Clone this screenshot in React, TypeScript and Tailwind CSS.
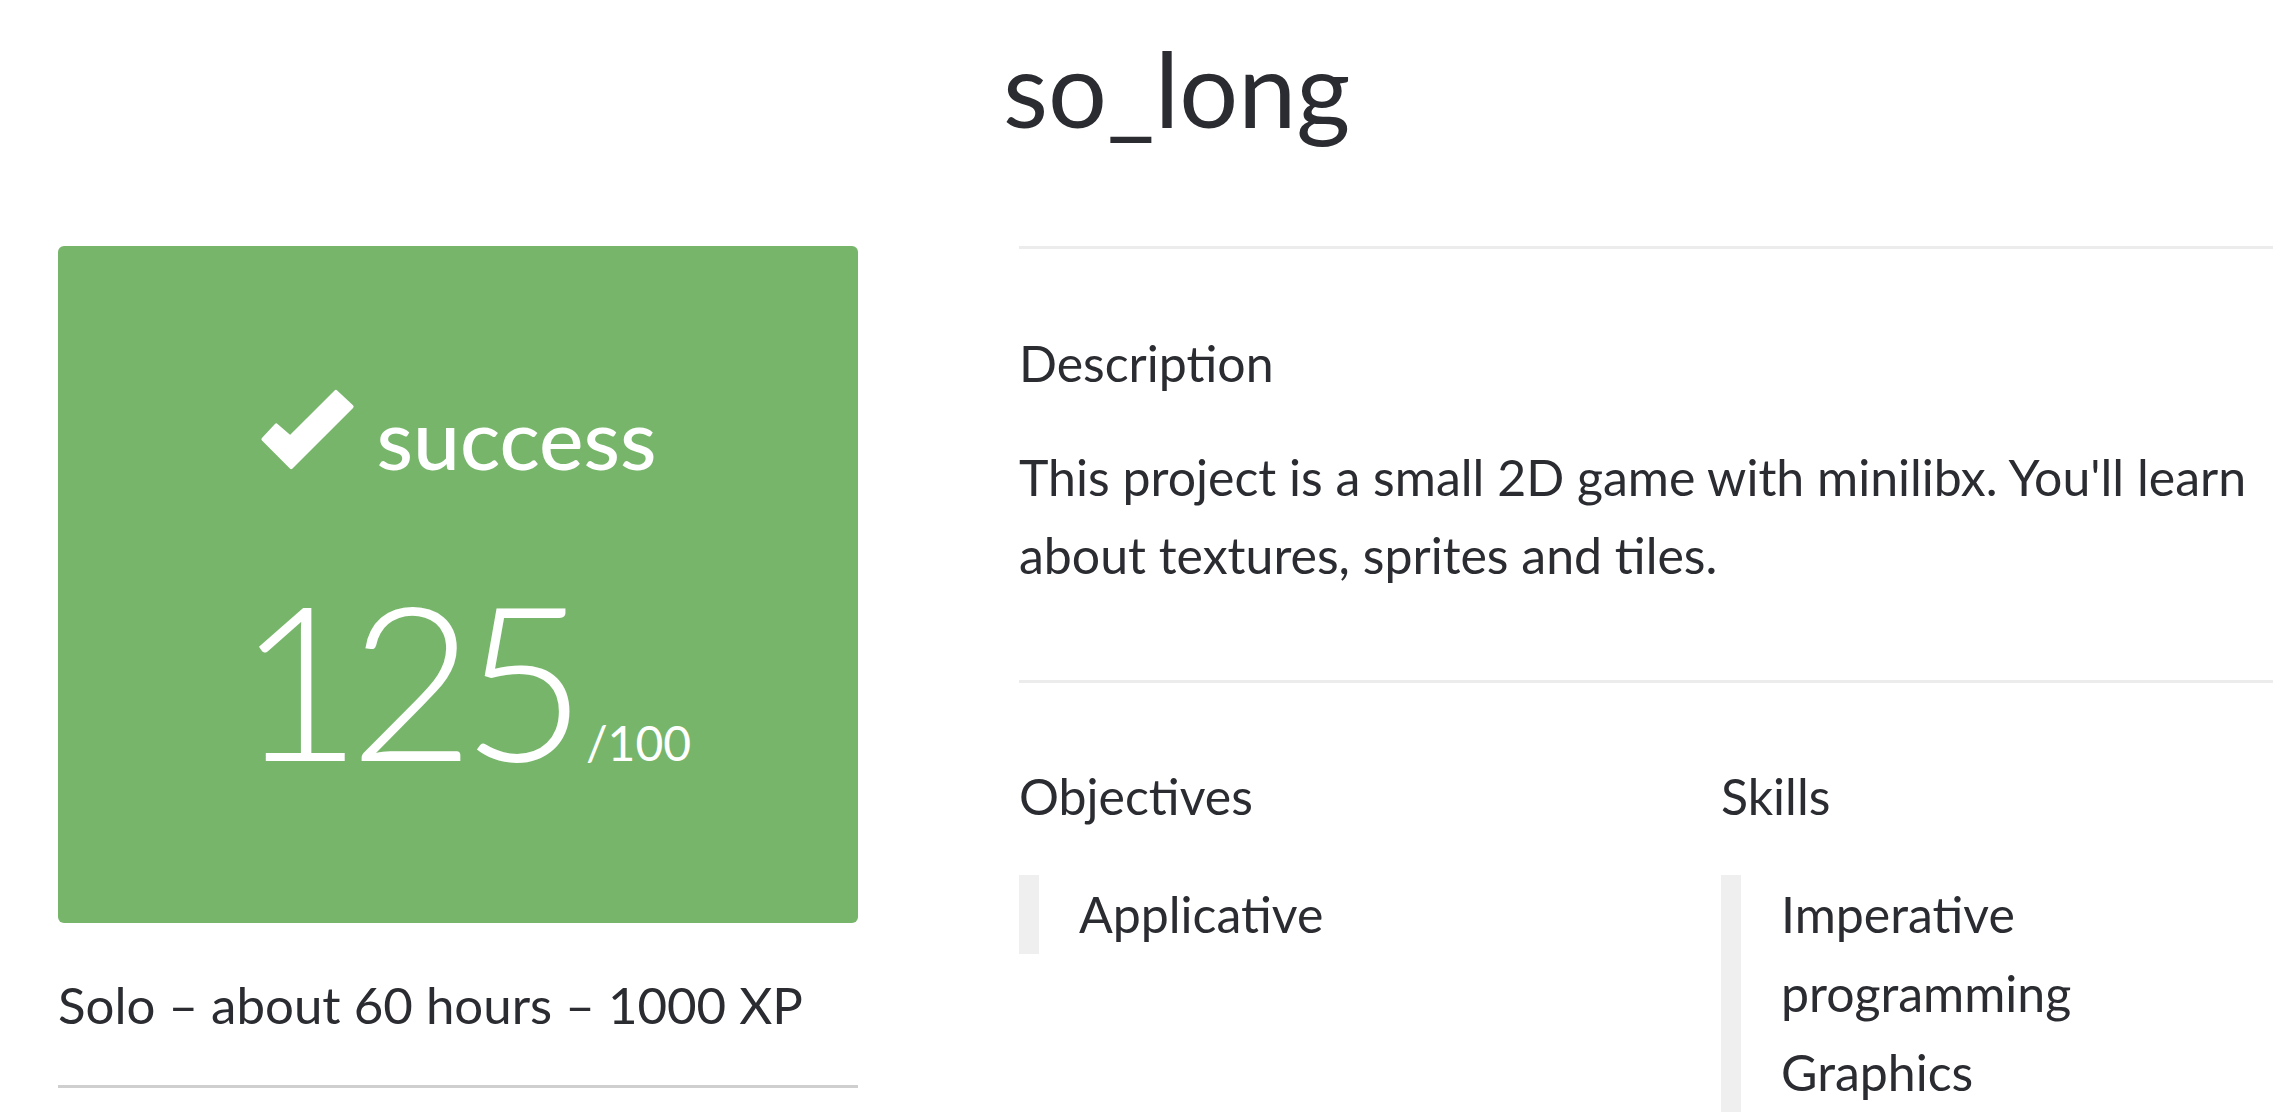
import * as React from "react"

function CheckMark() {
  return (
    <svg viewBox="-3 -3 101 87" className="w-[95px] h-[81px]" aria-hidden="true">
      <polygon
        points="14,36 29,49 78,0 95,16 30,81 0,51"
        fill="#ffffff"
        stroke="#ffffff"
        strokeWidth="4"
        strokeLinejoin="round"
      />
    </svg>
  )
}

function ListBlock({ items }: { items: string[] }) {
  return (
    <ul className="mt-[40px] border-l-[20px] border-[#efefef] pl-[40px] text-[50px] leading-[79px]">
      {items.map((item) => (
        <li key={item}>{item}</li>
      ))}
    </ul>
  )
}

export default function App() {
  return (
    <div
      className="w-full h-[1118px] overflow-hidden bg-white text-[#2b2c31]"
      style={{ fontFamily: "Lato, 'Noto Sans', sans-serif" }}
    >
      <div className="flex gap-[161px] pl-[58px]">
        {/* left: mark card */}
        <aside className="w-[800px] shrink-0 pt-[246px]">
          <div className="h-[677px] rounded-[6px] bg-[#76b56a] flex flex-col items-center pt-[143px] text-white">
            <div className="flex items-baseline gap-[22px]">
              <CheckMark />
              <span className="text-[84px] leading-none font-medium">success</span>
            </div>
            <div className="mt-[90px] flex items-baseline gap-[12px] pl-[12px]">
              <span className="text-[216px] leading-none font-light tracking-[-0.06em]">125</span>
              <span className="text-[48px] leading-none font-normal">/100</span>
            </div>
          </div>
          <p className="mt-[43px] text-[51px] leading-[78px]">Solo – about 60 hours – 1000 XP</p>
          <div className="mt-[41px] h-[3px] bg-[#cfcfcf]" />
        </aside>

        {/* right: project details */}
        <main className="flex-1 min-w-0">
          <h1 className="h-[246px] pt-[36px] -ml-[16px] text-[104px] leading-none font-normal">so_long</h1>
          <div className="h-[3px] bg-[#ececec]" />

          <h2 className="mt-[75px] text-[50px] leading-[78px] font-normal">Description</h2>
          <p className="mt-[36px] text-[50px] leading-[78px]">
            This project is a small 2D game with minilibx. You'll learn about textures, sprites and tiles.
          </p>
          <div className="mt-[86px] h-[3px] bg-[#ececec]" />

          <div className="grid grid-cols-[702px_1fr]">
            <section>
              <h2 className="mt-[74px] text-[50px] leading-[78px] font-normal">Objectives</h2>
              <ListBlock items={["Applicative"]} />
            </section>
            <section>
              <h2 className="mt-[74px] text-[50px] leading-[78px] font-normal">Skills</h2>
              <ListBlock items={["Imperative programming", "Graphics"]} />
            </section>
          </div>
        </main>
      </div>
    </div>
  )
}
